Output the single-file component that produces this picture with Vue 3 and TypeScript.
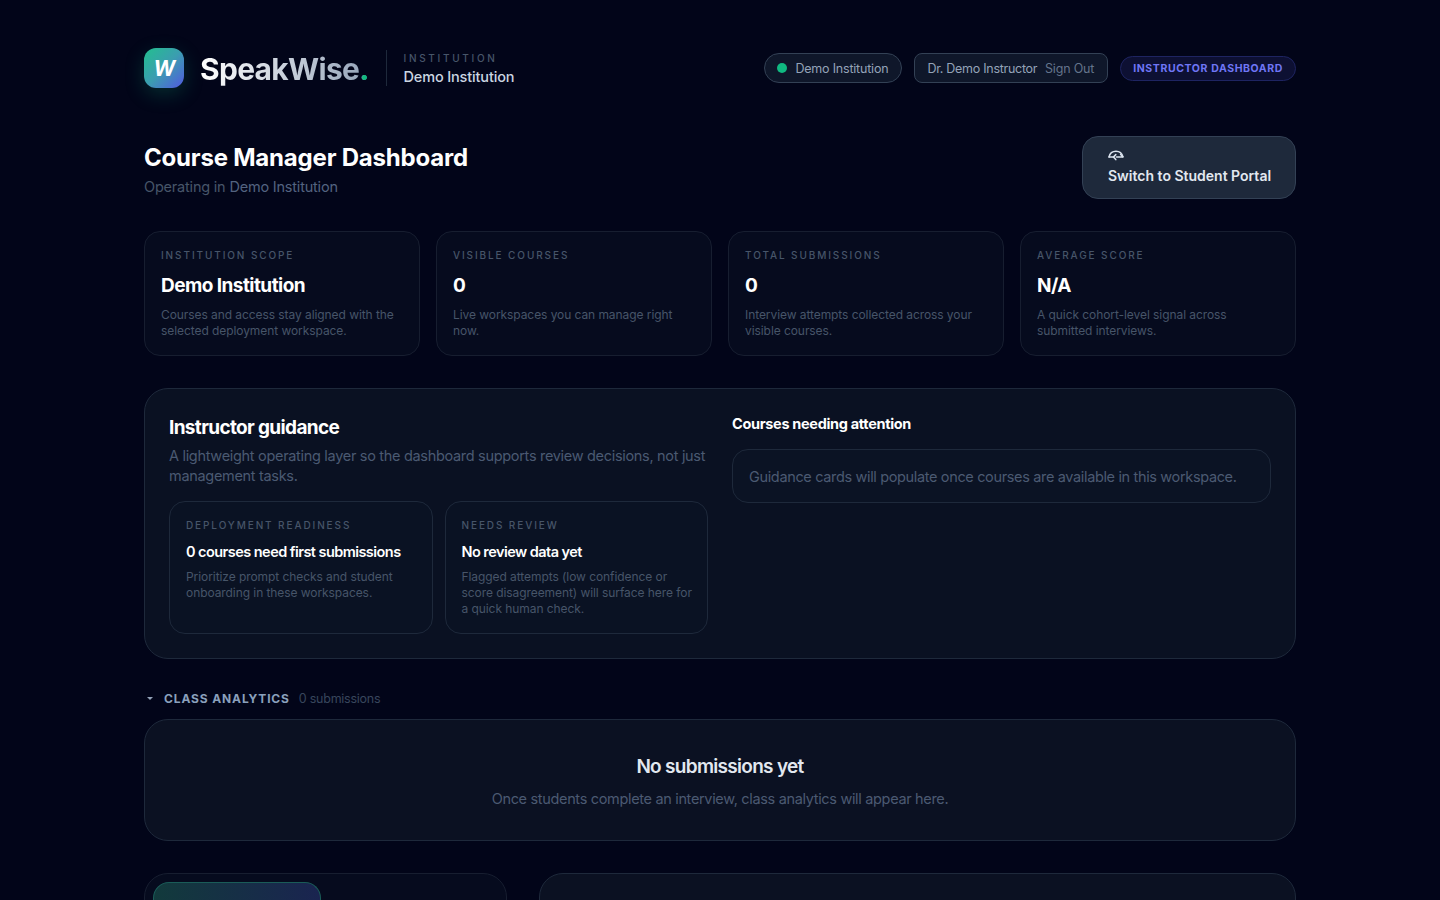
<script setup lang="ts">
interface Stat { label: string; value: string; desc: string }
const stats: Stat[] = [
  { label: 'INSTITUTION SCOPE', value: 'Demo Institution', desc: 'Courses and access stay aligned with the selected deployment workspace.' },
  { label: 'VISIBLE COURSES', value: '0', desc: 'Live workspaces you can manage right now.' },
  { label: 'TOTAL SUBMISSIONS', value: '0', desc: 'Interview attempts collected across your visible courses.' },
  { label: 'AVERAGE SCORE', value: 'N/A', desc: 'A quick cohort-level signal across submitted interviews.' },
]
const guides: Stat[] = [
  { label: 'DEPLOYMENT READINESS', value: '0 courses need first submissions', desc: 'Prioritize prompt checks and student onboarding in these workspaces.' },
  { label: 'NEEDS REVIEW', value: 'No review data yet', desc: 'Flagged attempts (low confidence or score disagreement) will surface here for a quick human check.' },
]
</script>

<template>
  <div class="page">
    <header class="top">
      <div class="brand">
        <div class="logo"><span>W</span></div>
        <div class="wordmark">SpeakWise<i>.</i></div>
        <div class="inst">
          <div class="inst-label">INSTITUTION</div>
          <div class="inst-name">Demo Institution</div>
        </div>
      </div>
      <div class="top-right">
        <div class="pill round"><b class="dot"></b>Demo Institution</div>
        <div class="pill user">Dr. Demo Instructor <span class="signout">Sign Out</span></div>
        <div class="role">INSTRUCTOR DASHBOARD</div>
      </div>
    </header>

    <section class="heading">
      <div>
        <h1>Course Manager Dashboard</h1>
        <p>Operating in <span>Demo Institution</span></p>
      </div>
      <button class="switch" type="button">
        <svg class="switch-icon" width="16" height="11" viewBox="0 0 16 11" fill="none" stroke="#dbe3ee" stroke-width="1.5" stroke-linecap="round" stroke-linejoin="round">
          <path d="M1 7C1.800 3.400 4.600 1.200 8 1.200c3.300 0 6 2 6.900 5.600" />
          <path d="M1 7h5.500M8.500 7h6.400M12.600 4.400l2.300 2.400" />
          <path d="M7.800 4.600 5.400 7l2.400 2.600" />
        </svg>
        <span>Switch to Student Portal</span>
      </button>
    </section>

    <section class="stats">
      <article v-for="s in stats" :key="s.label" class="stat">
        <div class="label">{{ s.label }}</div>
        <div class="value">{{ s.value }}</div>
        <div class="desc">{{ s.desc }}</div>
      </article>
    </section>

    <section class="guidance">
      <div class="g-left">
        <h2>Instructor guidance</h2>
        <p class="lead">A lightweight operating layer so the dashboard supports review decisions, not just management tasks.</p>
        <div class="g-cards">
          <article v-for="g in guides" :key="g.label" class="g-card">
            <div class="label">{{ g.label }}</div>
            <div class="g-value">{{ g.value }}</div>
            <div class="desc">{{ g.desc }}</div>
          </article>
        </div>
      </div>
      <div class="g-right">
        <h3>Courses needing attention</h3>
        <div class="empty">Guidance cards will populate once courses are available in this workspace.</div>
      </div>
    </section>

    <div class="analytics-head">
      <span class="caret"></span>
      <span class="a-title">CLASS ANALYTICS</span>
      <span class="a-count">0 submissions</span>
    </div>
    <section class="no-subs">
      <h2>No submissions yet</h2>
      <p>Once students complete an interview, class analytics will appear here.</p>
    </section>

    <section class="bottom">
      <div class="b-left"><div class="b-tab"></div></div>
      <div class="b-right"></div>
    </section>
  </div>
</template>

<style>
html, body { margin: 0; background: #020519; }
</style>

<style scoped>
.page {
  box-sizing: border-box;
  width: 1152px;
  margin: 0 auto;
  padding: 48px 0 40px;
  font-family: Inter, "Liberation Sans", sans-serif;
  color: #fff;
}
.top { display: flex; justify-content: space-between; align-items: center; height: 40px; }
.brand { display: flex; align-items: center; }
.logo {
  width: 40px; height: 40px; border-radius: 12px;
  background: linear-gradient(135deg, #22c08e 0%, #3b9db0 50%, #5159e0 100%);
  display: flex; align-items: center; justify-content: center;
  box-shadow: 0 6px 20px rgba(16, 185, 129, .22);
}
.logo span { font: italic 700 21px Inter, sans-serif; color: #fff; padding-left: 1px; }
.wordmark {
  margin-left: 16px; padding-top: 2px; font-size: 30px; font-weight: 700; letter-spacing: -.7px; line-height: 40px;
  background: linear-gradient(90deg, #fff, #94a3b8); -webkit-background-clip: text; background-clip: text; color: transparent;
}
.wordmark i { font-style: normal; color: #10b981; -webkit-text-fill-color: #10b981; }
.inst { margin-left: 17px; padding-left: 17px; border-left: 1px solid #1e293b; height: 36px; display: flex; flex-direction: column; justify-content: center; }
.inst-label { padding-top: 2px; font-size: 10px; letter-spacing: 2.700px; color: #475569; line-height: 14px; font-weight: 500; }
.inst-name { margin-top: 2px; font-size: 14.500px; color: #cbd5e1; line-height: 20px; font-weight: 500; letter-spacing: -.15px; }
.top-right { display: flex; align-items: center; gap: 12px; }
.pill {
  box-sizing: border-box; height: 30px; display: flex; align-items: center;
  background: #0f172a; border: 1px solid #334155; color: #94a3b8; font-size: 12.500px; letter-spacing: -.2px; padding: 0 12px;
}
.pill.round { border-radius: 15px; padding-right: 13px; }
.pill.user { border-radius: 8px; white-space: pre; letter-spacing: -.28px; padding-right: 13px; }
.dot { width: 10px; height: 10px; border-radius: 50%; background: #10b981; margin-right: 8px; }
.signout { color: #64748b; margin-left: 4.500px; letter-spacing: -.18px; }
.role {
  box-sizing: border-box; height: 25px; line-height: 23px; padding: 0 12px; border-radius: 13px;
  border: 1px solid #1e2461; background: #0d1033; color: #6f76f5; font-size: 10.500px; font-weight: 700; letter-spacing: .6px;
}
.heading { display: flex; justify-content: space-between; align-items: flex-start; margin-top: 48px; height: 63px; }
h1 { margin: 6px 0 0; font-size: 24px; line-height: 32px; font-weight: 700; letter-spacing: -.2px; }
.heading p { margin: 3px 0 0; font-size: 14.500px; line-height: 20px; color: #475569; letter-spacing: -.2px; }
.heading p span { color: #536380; }
.switch {
  box-sizing: border-box; width: 214px; height: 63px; padding: 0 25px; text-align: left; white-space: nowrap;
  border-radius: 16px; border: 1px solid #334155; background: #1e293b; color: #e2e8f0;
  font: 600 14px Inter, sans-serif; letter-spacing: 0; display: flex; flex-direction: column; justify-content: center; align-items: flex-start; gap: 5px;
}
.switch-icon { margin: -1px 0 1px; }
.stats { display: grid; grid-template-columns: repeat(4, 1fr); gap: 16px; margin-top: 32px; }
.stat {
  box-sizing: border-box; height: 125px; padding: 15px 16px 16px; border: 1px solid #171e30; border-radius: 16px;
  background: #060b1e;
}
.label { font-size: 10px; line-height: 16px; letter-spacing: 1.900px; color: #475569; font-weight: 500; }
.value { margin-top: 9px; font-size: 19px; line-height: 28px; font-weight: 700; letter-spacing: -.55px; }
.desc { margin-top: 7px; font-size: 12px; line-height: 16px; color: #475569; letter-spacing: -.07px; }
.guidance {
  box-sizing: border-box; height: 271px; margin-top: 32px; padding: 24px; display: grid; grid-template-columns: 1fr 1fr; gap: 24px;
  border: 1px solid #1e293b; border-radius: 24px; background: #0a1122;
}
h2 { margin: 0; font-size: 19px; line-height: 28px; font-weight: 700; letter-spacing: -.65px; }
.g-left h2 { margin-top: 1px; }
.lead { margin: 4px 0 0; font-size: 14.500px; line-height: 20px; color: #4b5a72; letter-spacing: -.31px; }
.g-cards { display: grid; grid-template-columns: 1fr 1fr; gap: 12px; margin-top: 15px; }
.g-card { box-sizing: border-box; height: 133px; padding: 15px 12px 16px 16px; border: 1px solid #1e293b; border-radius: 16px; background: #0a1223; }
.g-value { margin-top: 9px; font-size: 14.500px; line-height: 20px; font-weight: 600; letter-spacing: -.55px; }
.g-card .desc { margin-top: 7px; }
h3 { margin: 0; font-size: 14.500px; line-height: 22px; font-weight: 700; letter-spacing: -.32px; }
.empty {
  box-sizing: border-box; height: 54px; margin-top: 14px; padding: 0 16px; display: flex; align-items: center;
  border: 1px solid #1e293b; border-radius: 16px; background: #0b1324; color: #4b5a72; font-size: 14.500px; letter-spacing: -.35px;
}
.analytics-head { display: flex; align-items: center; margin-top: 29px; height: 20px; }
.caret { width: 0; height: 0; border-left: 3px solid transparent; border-right: 3px solid transparent; border-top: 3.500px solid #94a3b8; margin: 0 11px 0 3px; }
.a-title { font-size: 12px; font-weight: 700; letter-spacing: .87px; color: #8aa0bc; }
.a-count { margin-left: 9px; font-size: 12.500px; color: #38465c; letter-spacing: -.25px; }
.no-subs {
  box-sizing: border-box; height: 122px; margin-top: 11px; padding-top: 33px; text-align: center;
  border: 1px solid #1e293b; border-radius: 24px; background: #0b1122;
}
.no-subs h2 { color: #e2e8f0; font-weight: 600; letter-spacing: -.7px; }
.no-subs p { margin: 8px 0 0; font-size: 14.500px; line-height: 20px; color: #4b5a72; letter-spacing: -.33px; }
.bottom { display: grid; grid-template-columns: 363px 1fr; gap: 32px; margin-top: 32px; }
.b-left { box-sizing: border-box; height: 400px; padding: 8px; border: 1px solid #171e30; border-radius: 24px; background: #060b1e; }
.b-tab { box-sizing: border-box; width: 168px; height: 60px; border: 1px solid #1a5c58; border-bottom: none; border-radius: 16px 16px 0 0; background: linear-gradient(90deg, #123a3c, #1a2450); }
.b-right { height: 400px; box-sizing: border-box; border: 1px solid #1e293b; border-radius: 24px; background: #0b1122; }
</style>
